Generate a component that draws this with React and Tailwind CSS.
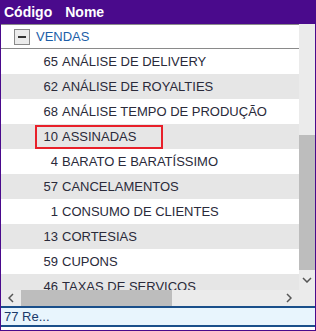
import React from 'react';

const rows = [
  { code: '65', name: 'ANÁLISE DE DELIVERY' },
  { code: '62', name: 'ANÁLISE DE ROYALTIES' },
  { code: '68', name: 'ANÁLISE TEMPO DE PRODUÇÃO' },
  { code: '10', name: 'ASSINADAS', selected: true },
  { code: '4', name: 'BARATO E BARATÍSSIMO' },
  { code: '57', name: 'CANCELAMENTOS' },
  { code: '1', name: 'CONSUMO DE CLIENTES' },
  { code: '13', name: 'CORTESIAS' },
  { code: '59', name: 'CUPONS' },
  { code: '46', name: 'TAXAS DE SERVICOS' },
];

const ChevronDown = () => (
  <svg width="10" height="6" viewBox="0 0 10 6" fill="none" stroke="#555" strokeWidth="1.5">
    <path d="M1 1l4 4 4-4" />
  </svg>
);

const ChevronLeft = () => (
  <svg width="6" height="10" viewBox="0 0 6 10" fill="none" stroke="#555" strokeWidth="1.5">
    <path d="M5 1L1 5l4 4" />
  </svg>
);

const ChevronRight = () => (
  <svg width="6" height="10" viewBox="0 0 6 10" fill="none" stroke="#555" strokeWidth="1.5">
    <path d="M1 1l4 4-4 4" />
  </svg>
);

export default function App() {
  return (
    <div className="w-[316px] h-[331px] flex flex-col bg-white border-x border-b border-[#4a0a8c] font-['Liberation_Sans',Arial,sans-serif] text-[13px] overflow-hidden">
      {/* cabeçalho */}
      <div className="h-[24px] shrink-0 bg-[#4a0a8c] flex items-center gap-[13px] px-[3px] text-white font-bold text-[14px]">
        <span>Código</span>
        <span>Nome</span>
      </div>

      <div className="flex flex-1 min-h-0">
        <div className="flex-1 min-w-0 flex flex-col">
          <div className="flex-1 min-h-0 overflow-hidden">
            <div className="h-[25px] flex items-center border-t border-b border-[#8a8a8a] pl-[13px] gap-[6px]">
              <span className="w-[16px] h-[16px] bg-[#ececec] border border-[#8a8a8a] flex items-center justify-center">
                <span className="w-[8px] h-[2px] bg-[#333]" />
              </span>
              <span className="text-[#1c5ea8]">VENDAS</span>
            </div>
            {rows.map((r, i) => (
              <div key={r.code} className={`h-[25px] flex items-center ${i % 2 ? 'bg-[#e6e6e6]' : 'bg-white'}`}>
                <div className={`h-[25px] flex items-center pl-[34px] ${r.selected ? 'relative' : ''}`}>
                  <span className="w-[23px] text-right text-[#2a2a3a]">{r.code}</span>
                  <span className="pl-[4px] text-[#2a2a3a] whitespace-nowrap">{r.name}</span>
                  {r.selected && (
                    <span className="absolute left-[34px] w-[128px] top-[1px] bottom-0 border-[2px] border-[#e8202a]" />
                  )}
                </div>
              </div>
            ))}
          </div>
          {/* barra horizontal */}
          <div className="h-[16px] shrink-0 bg-[#ebebeb] flex items-center">
            <div className="w-[20px] flex justify-center"><ChevronLeft /></div>
            <div className="w-[151px] h-full bg-[#bdbdbd]" />
            <div className="flex-1" />
            <div className="w-[20px] flex justify-center"><ChevronRight /></div>
          </div>
        </div>
        {/* barra vertical */}
        <div className="w-[16px] shrink-0 bg-[#ebebeb] flex flex-col">
          <div className="h-[111px]" />
          <div className="h-[135px] bg-[#bdbdbd]" />
          <div className="h-[20px] flex items-center justify-center"><ChevronDown /></div>
        </div>
      </div>

      {/* rodapé */}
      <div className="h-[21px] shrink-0 bg-[#e8f5fd] border-y-2 border-[#1a4f8a] flex items-center px-[3px] text-[#1a3a6a] mb-[3px]">
        77 Re...
      </div>
    </div>
  );
}
